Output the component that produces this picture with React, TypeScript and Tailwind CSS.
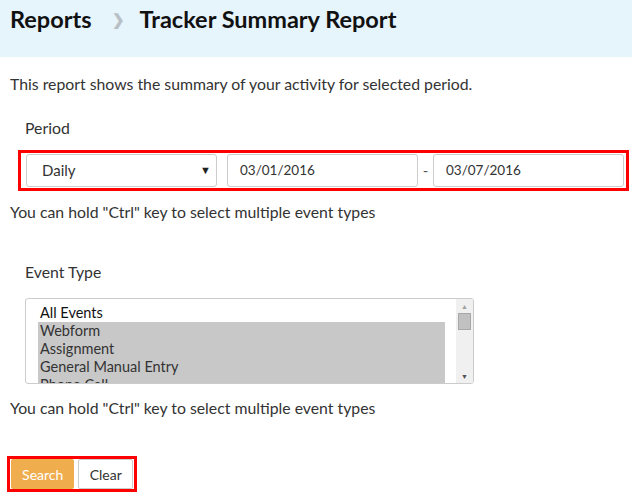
import React from 'react';

const events = ['All Events', 'Webform', 'Assignment', 'General Manual Entry', 'Phone Call'];

const App = () => {
  return (
    <div className="min-h-[495px] w-[632px] bg-white text-[#333] font-['Lato',sans-serif] overflow-hidden">
      {/* Header */}
      <div className="h-[57px] bg-[#e6f4fc] flex items-start pt-[5px] pl-[10px]">
        <h1 className="flex items-center text-[23.5px] font-bold text-[#111] leading-[28px]">
          <span>Reports</span>
          <span className="ml-[20px] mr-[15px] text-[#b8c0c6] text-[15px] font-black">&#x276F;</span>
          <span>Tracker Summary Report</span>
        </h1>
      </div>

      <div className="pt-[17px]">
        <p className="pl-[10px] text-[15.8px] leading-[20px]">
          This report shows the summary of your activity for selected period.
        </p>

        {/* Period */}
        <div className="mt-[24px] pl-[25px] text-[15.8px] leading-[20px]">Period</div>
        <div className="mt-[12px] ml-[18px] w-[611px] h-[41px] border-[3px] border-[#ff0000] flex items-center pl-[5px]">
          <div className="shrink-0 w-[191px] h-[33px] border border-[#ccc] rounded-[3px] flex items-center justify-between pl-[15px] pr-[5px] text-[15px]">
            <span>Daily</span>
            <span className="text-[11px] text-[#222]">&#9660;</span>
          </div>
          <div className="shrink-0 ml-[10px] w-[191px] h-[33px] border border-[#ccc] rounded-[3px] flex items-center px-[12px] text-[13.5px]">
            03/01/2016
          </div>
          <span className="shrink-0 w-[15px] text-center text-[15px] text-[#555]">-</span>
          <div className="shrink-0 w-[191px] h-[33px] border border-[#ccc] rounded-[3px] flex items-center px-[12px] text-[13.5px]">
            03/07/2016
          </div>
        </div>
        <p className="mt-[11px] pl-[10px] text-[15.8px] leading-[20px]">
          You can hold "Ctrl" key to select multiple event types
        </p>

        {/* Event Type */}
        <div className="mt-[40px] pl-[25px] text-[15.8px] leading-[20px]">Event Type</div>
        <div className="mt-[16px] ml-[25px] w-[449px] h-[86px] border border-[#ccc] rounded-[3px] flex overflow-hidden">
          <div className="flex-1 pl-[12px] pr-[11px] pt-[5px] overflow-hidden">
            {events.map((ev, i) => (
              <div
                key={ev}
                className={`h-[18px] leading-[18px] text-[14.5px] pl-[2px] whitespace-nowrap ${i === 0 ? 'text-[#111]' : 'bg-[#c8c8c8] text-[#333]'}`}
              >
                {ev}
              </div>
            ))}
          </div>
          <div className="w-[17px] bg-[#f0f0f0] flex flex-col items-center py-[2px]">
            <span className="text-[7px] text-[#a0a0a0] leading-[10px]">&#9650;</span>
            <div className="w-[13px] h-[17px] bg-[#c1c1c1] border border-[#a8a8a8] mt-[2px]" />
            <div className="flex-1" />
            <span className="text-[7px] text-[#505050] leading-[10px]">&#9660;</span>
          </div>
        </div>
        <p className="mt-[14px] pl-[10px] text-[15.8px] leading-[20px]">
          You can hold "Ctrl" key to select multiple event types
        </p>

        {/* Buttons */}
        <div className="mt-[38px] ml-[7px] w-[130px] h-[36px] border-[3px] border-[#ff0000] flex items-center gap-[4px] px-[1px]">
          <button className="h-[30px] w-[64px] bg-[#f0ad4e] text-white text-[14px] rounded-[2px]">Search</button>
          <button className="h-[30px] w-[55px] bg-white border border-[#ccc] text-[#333] text-[14px] rounded-[2px]">Clear</button>
        </div>
      </div>
    </div>
  );
};

export default App;
